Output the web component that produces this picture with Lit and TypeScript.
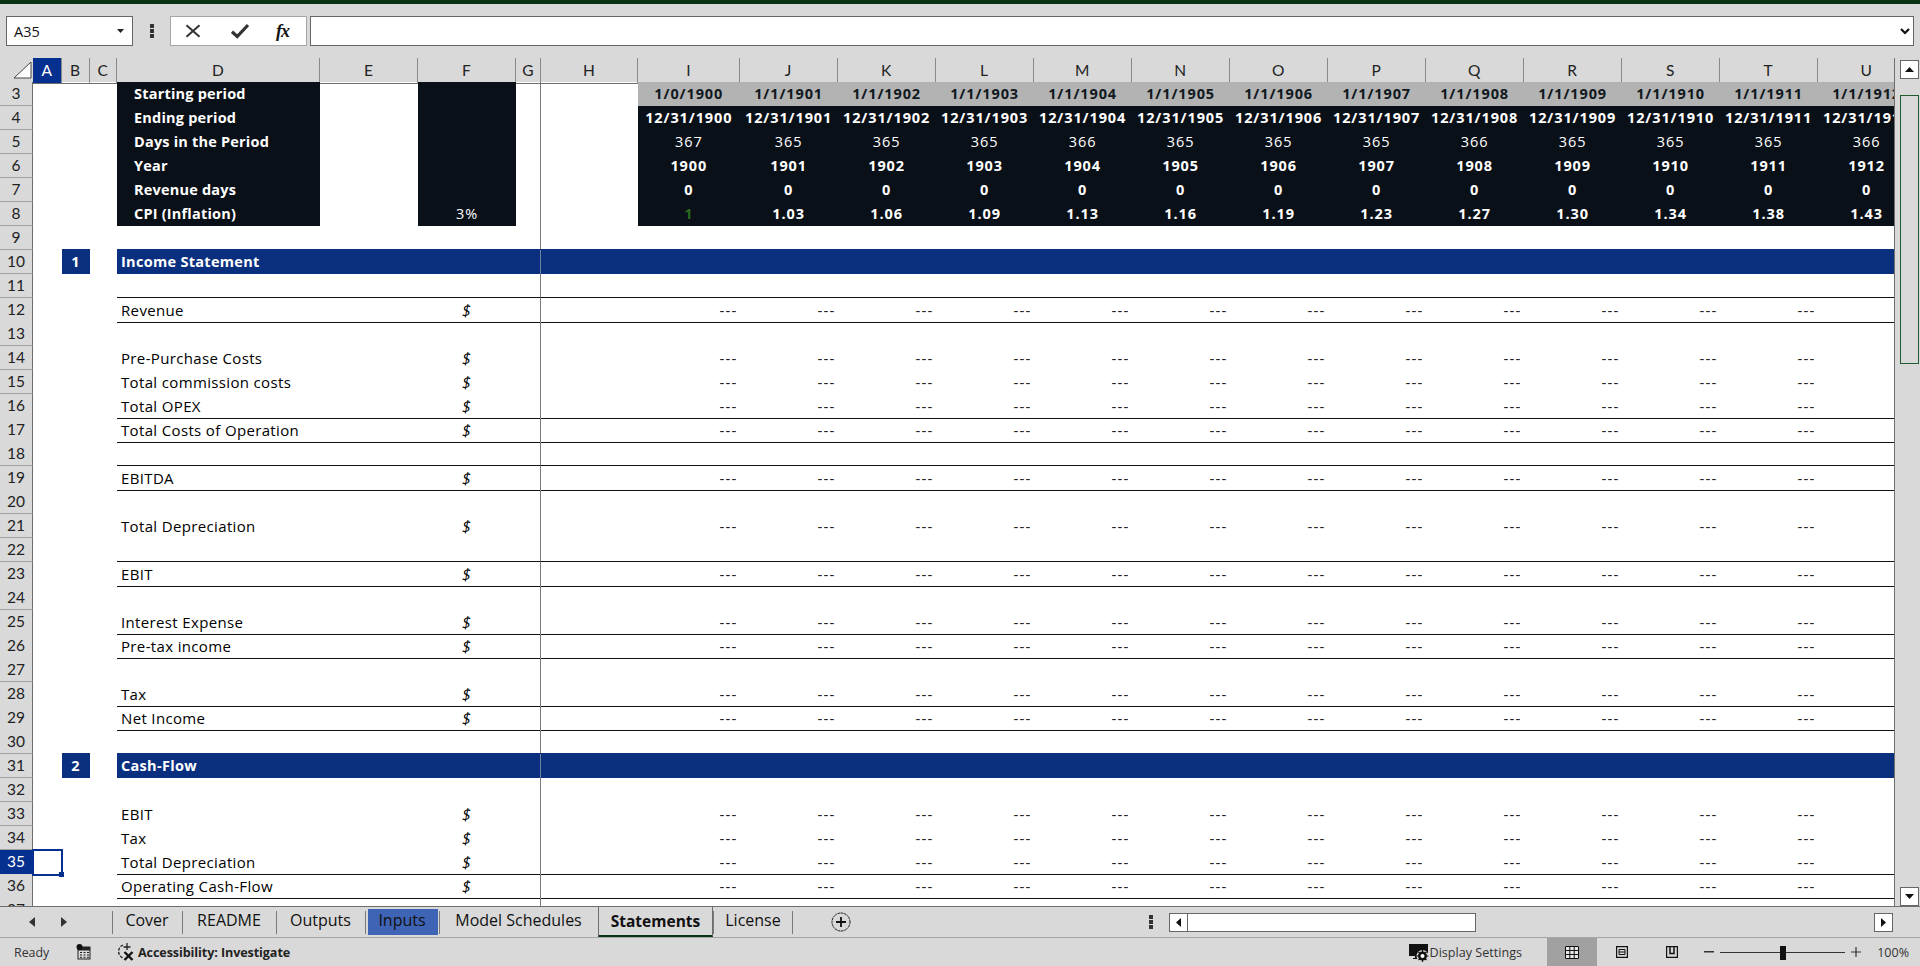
import { LitElement, html, css, nothing } from "lit";
import { customElement } from "lit/decorators.js";

type Row = { label?: string; dash?: boolean; line?: boolean; section?: string };

const ROWS: Record<number, Row> = {
  11: { line: true },
  12: { label: "Revenue", dash: true, line: true },
  14: { label: "Pre-Purchase Costs", dash: true },
  15: { label: "Total commission costs", dash: true },
  16: { label: "Total OPEX", dash: true, line: true },
  17: { label: "Total Costs of Operation", dash: true, line: true },
  18: { line: true },
  19: { label: "EBITDA", dash: true, line: true },
  21: { label: "Total Depreciation", dash: true },
  22: { line: true },
  23: { label: "EBIT", dash: true, line: true },
  25: { label: "Interest Expense", dash: true, line: true },
  26: { label: "Pre-tax income", dash: true, line: true },
  28: { label: "Tax", dash: true, line: true },
  29: { label: "Net Income", dash: true, line: true },
  33: { label: "EBIT", dash: true },
  34: { label: "Tax", dash: true },
  35: { label: "Total Depreciation", dash: true, line: true },
  36: { label: "Operating Cash-Flow", dash: true, line: true },
  10: { label: "Income Statement", section: "1" },
  31: { label: "Cash-Flow", section: "2" },
};

const COLS = "ABCDEFGHIJKLMNOPQRSTU".split("");
const PERIOD = COLS.slice(8);
const YEARS = PERIOD.map((_, i) => 1900 + i);
const DAYS = [367, 365, 365, 365, 366, 365, 365, 365, 366, 365, 365, 365, 366];
const CPI = ["1", "1.03", "1.06", "1.09", "1.13", "1.16", "1.19", "1.23", "1.27", "1.30", "1.34", "1.38", "1.43"];
const HEAD_LABELS: Record<number, string> = {
  3: "Starting period",
  4: "Ending period",
  5: "Days in the Period",
  6: "Year",
  7: "Revenue days",
  8: "CPI (Inflation)",
};
const TABS = ["Cover", "README", "Outputs", "Inputs", "Model Schedules", "Statements", "License"];

function headValue(r: number, i: number): string {
  switch (r) {
    case 3: return i === 0 ? "1/0/1900" : `1/1/${YEARS[i]}`;
    case 4: return `12/31/${YEARS[i]}`;
    case 5: return String(DAYS[i]);
    case 6: return String(YEARS[i]);
    case 7: return "0";
    default: return CPI[i];
  }
}

@customElement("app-root")
export class AppRoot extends LitElement {
  static styles = css`
    :host {
      display: flex;
      flex-direction: column;
      width: 1920px;
      height: 966px;
      overflow: hidden;
      background: #d9d9d9;
      font-family: "Open Sans", "Liberation Sans", sans-serif;
      color: #000;
    }
    .titlebar { height: 4px; background: #0a3314; flex: none; }

    /* formula bar */
    .fbar { flex: none; height: 54px; box-sizing: border-box; padding: 12px 6px 0 6px; display: flex; align-items: flex-start; }
    .namebox {
      width: 127px; height: 30px; box-sizing: border-box; border: 1px solid #666; background: #fff;
      display: flex; align-items: center; justify-content: space-between; padding: 0 8px 0 7px;
      font-size: 14.5px; color: #111;
    }
    .dots { width: 37px; height: 30px; display: flex; align-items: center; justify-content: center; }
    .fxbox {
      width: 137px; height: 30px; box-sizing: border-box; border: 1px solid #a6a6a6; background: #fff;
      display: flex; align-items: center; margin-right: 3px; padding-left: 14px;
    }
    .ck { margin-left: 30px; display: flex; }
    .fx { font: italic bold 18px "Liberation Serif", serif; color: #111; margin-left: 27px; letter-spacing: -1px; }
    .finput {
      flex: 1; height: 30px; box-sizing: border-box; border: 1px solid #666; background: #fff;
      display: flex; align-items: center; justify-content: flex-end; padding-right: 3px;
    }

    /* sheet */
    .main { flex: 1; min-height: 0; display: flex; overflow: hidden; }
    .sheet { width: 1895px; flex: none; box-sizing: border-box; overflow: hidden; border-right: 1px solid #6e6e6e; background: #fff; }
    .row {
      display: grid; height: 24px; width: 1916px;
      grid-template-columns: 33px 28.5px 28px 27.5px 203px 98px 98px 25px 97px 101.6px repeat(12, 98px);
      font-size: 15px; line-height: 24px; letter-spacing: 0.35px;
    }
    .c { box-sizing: border-box; min-width: 0; white-space: nowrap; position: relative; }
    .hdr { background: #d9d9d9; font: 15.5px/25px "Lato", sans-serif; color: #222; letter-spacing: 0; }
    .hdr .c { border-bottom: 1px solid #6e6e6e; text-align: center; }
    .hdr .c + .c { border-right: 1px solid #8a8a8a; }
    .hdr .c.sel { background: #06308f; color: #fff; }
    .corner { padding: 0; }
    .corner svg { display: block; }
    .rh {
      background: #d9d9d9; text-align: center; color: #222; font: 15.5px/23px "Lato", sans-serif; letter-spacing: 0;
      border-bottom: 1px solid #a0a0a0; border-right: 1px solid #6e6e6e;
    }
    .rh.sel { background: #06308f; color: #fff; }
    .ln { border-bottom: 1px solid #111; }
    .g { border-right: 1px solid #7a7a7a; }
    .dark { background: #0a1018; color: #fff; }
    .gray { background: #b3b3b3; color: #101820; }
    .b { font-weight: 700; }
    .ctr { text-align: center; }
    .num { font-size: 14.5px; letter-spacing: 0.9px; }
    .lbl { padding-left: 4px; }
    .hlbl { padding-left: 17px; font-weight: 700; font-size: 14.5px; letter-spacing: 0.2px; }
    .usd { text-align: center; font-style: italic; font-size: 16px; letter-spacing: 0; padding-right: 1px; }
    .dash { text-align: right; padding-right: 2px; color: #222; letter-spacing: 1.200px; }
    .green { color: #2b6a1c; }
    .navy { background: #0a2f7f; color: #fff; font-weight: 700; font-size: 14.5px; letter-spacing: 0.3px; box-shadow: 0 -1px 0 #0a2f7f; }
    .g.navy { border-right-color: #6f7f9f; }
    .cursor {
      position: absolute; inset: -1px -1px -1px -1px; border: 2px solid #06308f; box-sizing: border-box; z-index: 2;
    }
    .cursor::after {
      content: ""; position: absolute; right: -3px; bottom: -3px; width: 5px; height: 5px; background: #06308f;
    }

    /* vertical scrollbar */
    .vs { flex: 1; display: flex; flex-direction: column; align-items: center; padding: 2px 0 0 3px; box-sizing: border-box; }
    .sbtn {
      width: 19px; height: 19px; box-sizing: border-box; border: 1px solid #666; background: #fff;
      display: flex; align-items: center; justify-content: center; flex: none;
    }
    .thumb { width: 19px; height: 269px; box-sizing: border-box; margin-top: 16px; border: 1px solid #1f5c2e; background: #d9d9d9; flex: none; }
    .spring { flex: 1; }

    /* tabs */
    .tabs {
      flex: none; height: 32px; box-sizing: border-box; border-top: 1px solid #6e6e6e;
      border-bottom: 1px solid #a6a6a6; display: flex; position: relative;
    }
    .nav { width: 112px; box-sizing: border-box; padding-left: 29px; display: flex; align-items: center; gap: 26px; }
    .tablist {
      display: grid; grid-template-columns: 70px 94px 89px 74px 159px 115px 80px; height: 30px;
    }
    .tab {
      display: flex; align-items: center; justify-content: center; box-sizing: border-box; padding-bottom: 4px;
      font-size: 16px; color: #111; position: relative;
    }
    .tab::before {
      content: ""; position: absolute; left: 0; top: 4px; bottom: 3px; width: 1px; background: #7a7a7a;
    }
    .tab.blue::after {
      content: ""; position: absolute; inset: 2px 1px 2px 3px; background: #3f63b5; z-index: 0;
    }
    .tab span { position: relative; z-index: 1; }
    .tab.act {
      font-weight: 700; font-size: 15.500px; border-bottom: 2px solid #0a3314;
      border-left: 1px solid #6e6e6e; border-right: 1px solid #6e6e6e; margin-top: -1px; padding-bottom: 0;
    }
    .tab.act::before { display: none; }
    .tab.last::after { content: ""; position: absolute; right: 0; top: 4px; bottom: 3px; width: 1px; background: #7a7a7a; }
    .addwrap { width: 96px; display: flex; align-items: center; justify-content: center; }
    .tabspring { flex: 1; }
    .tdots { width: 17px; display: flex; align-items: center; justify-content: center; margin-right: 10px; }
    .hs { width: 724px; margin-right: 27px; display: flex; align-items: center; }
    .hbtn {
      width: 19px; height: 19px; box-sizing: border-box; border: 1px solid #666; background: #fff;
      display: flex; align-items: center; justify-content: center; flex: none;
    }
    .htrack { width: 288px; height: 19px; box-sizing: border-box; border: 1px solid #666; border-left: 0; background: #fff; flex: none; }
    .hspring { flex: 1; }

    /* status */
    .status {
      flex: none; height: 28px; display: flex; align-items: center; font: 12.6px "Open Sans", "Noto Sans", sans-serif; color: #333;
    }
    .ready { width: 76px; padding-left: 14px; box-sizing: border-box; font-size: 12.4px; }
    .st-ic { display: flex; align-items: center; }
    .calc { width: 40px; }
    .acc { font-weight: 700; color: #222; font-size: 12.600px; margin-left: 2px; letter-spacing: -0.1px; }
    .st-spring { flex: 1; }
    .disp { margin-left: 1px; margin-right: 25px; }
    .view { width: 50px; height: 28px; display: flex; align-items: center; justify-content: center; }
    .view.on { background: #a0a0a0; }
    .zoom { display: flex; align-items: center; margin-left: 7px; width: 157px; flex: none; }
    .slider { width: 125px; flex: none; height: 1px; background: #333; position: relative; margin: 0 6px; }
    .slider i { position: absolute; left: 60px; top: -6px; width: 6px; height: 14px; background: #111; }
    .pct { width: 59px; flex: none; text-align: right; padding-right: 11px; box-sizing: border-box; font-size: 12.500px; }
  `;

  private icon(kind: string) {
    switch (kind) {
      case "x":
        return html`<svg width="16" height="14" viewBox="0 0 16 14"><path d="M1.500 1.200 14.500 12.800M14.500 1.200 1.500 12.800" stroke="#333" stroke-width="2" fill="none"/></svg>`;
      case "check":
        return html`<svg width="18" height="16" viewBox="0 0 18 16"><path d="M1 8.700 6.200 13.500 17 2" stroke="#333" stroke-width="3.200" fill="none"/></svg>`;
      case "dots":
        return html`<svg width="4" height="14" viewBox="0 0 4 14"><rect y="0" width="4" height="4" fill="#333"/><rect y="5" width="4" height="4" fill="#333"/><rect y="10" width="4" height="4" fill="#333"/></svg>`;
      default:
        return nothing;
    }
  }

  private headCells(r: number) {
    const tone = r === 3 ? "gray b" : "dark";
    return html`
      <div class="c"></div><div class="c"></div><div class="c"></div>
      <div class="c dark hlbl">${HEAD_LABELS[r]}</div>
      <div class="c"></div>
      <div class="c dark ctr num">${r === 8 ? "3%" : ""}</div>
      <div class="c g"></div>
      <div class="c"></div>
      ${PERIOD.map((_, i) => {
        const weight = r === 5 || r === 3 ? "" : "b";
        const green = r === 8 && i === 0 ? "green" : "";
        return html`<div class="c ctr num ${tone} ${weight} ${green}">${headValue(r, i)}</div>`;
      })}
    `;
  }

  private bodyCells(r: number) {
    const d = ROWS[r] ?? {};
    if (d.section) {
      return html`
        <div class="c"></div>
        <div class="c navy ctr">${d.section}</div>
        <div class="c"></div>
        <div class="c navy lbl">${d.label}</div>
        <div class="c navy"></div><div class="c navy"></div><div class="c navy g"></div>
        ${COLS.slice(7).map(() => html`<div class="c navy"></div>`)}
      `;
    }
    const ln = d.line ? "ln" : "";
    return html`
      <div class="c">${r === 35 ? html`<div class="cursor"></div>` : nothing}</div>
      <div class="c"></div><div class="c"></div>
      <div class="c lbl ${ln}">${d.label ?? ""}</div>
      <div class="c ${ln}"></div>
      <div class="c usd ${ln}">${d.label ? "$" : ""}</div>
      <div class="c g ${ln}"></div>
      <div class="c ${ln}"></div>
      ${PERIOD.map((_, i) => html`<div class="c dash ${ln}">${d.dash && i < 12 ? "---" : ""}</div>`)}
    `;
  }

  private renderGrid() {
    const rows = [];
    for (let r = 3; r <= 37; r++) {
      rows.push(html`
        <div class="row">
          <div class="c rh ${r === 35 ? "sel" : ""}">${r}</div>
          ${r <= 8 ? this.headCells(r) : this.bodyCells(r)}
        </div>
      `);
    }
    return rows;
  }

  render() {
    return html`
      <div class="titlebar"></div>
      <div class="fbar">
        <div class="namebox"><span>A35</span>
          <svg width="7" height="4" viewBox="0 0 7 4"><path d="M0 0H7L3.500 4Z" fill="#222"/></svg>
        </div>
        <div class="dots">${this.icon("dots")}</div>
        <div class="fxbox">
          ${this.icon("x")}<span class="ck">${this.icon("check")}</span><span class="fx">fx</span>
        </div>
        <div class="finput">
          <svg width="10" height="7" viewBox="0 0 10 7"><path d="M1 1 5 5 9 1" stroke="#111" stroke-width="2.200" fill="none"/></svg>
        </div>
      </div>

      <div class="main">
        <div class="sheet">
          <div class="row hdr">
            <div class="c corner">
              <svg width="33" height="23" viewBox="0 0 33 23"><path d="M14 20 31 4V20Z" fill="#fff" stroke="#444"/></svg>
            </div>
            ${COLS.map((c) => html`<div class="c ${c === "A" ? "sel" : ""}">${c}</div>`)}
          </div>
          ${this.renderGrid()}
        </div>
        <div class="vs">
          <div class="sbtn"><svg width="9" height="5" viewBox="0 0 9 5"><path d="M0 5H9L4.500 0Z" fill="#111"/></svg></div>
          <div class="thumb"></div>
          <div class="spring"></div>
          <div class="sbtn"><svg width="9" height="5" viewBox="0 0 9 5"><path d="M0 0H9L4.500 5Z" fill="#111"/></svg></div>
        </div>
      </div>

      <div class="tabs">
        <div class="nav">
          <svg width="6" height="10" viewBox="0 0 6 10"><path d="M6 0V10L0 5Z" fill="#333"/></svg>
          <svg width="6" height="10" viewBox="0 0 6 10"><path d="M0 0V10L6 5Z" fill="#333"/></svg>
        </div>
        <div class="tablist">
          ${TABS.map((t) => html`<div class="tab ${t === "Inputs" ? "blue" : ""} ${t === "Statements" ? "act" : ""} ${t === "License" ? "last" : ""}"><span>${t}</span></div>`)}
        </div>
        <div class="addwrap">
          <svg width="20" height="20" viewBox="0 0 20 20"><circle cx="10" cy="10" r="9" fill="none" stroke="#222" stroke-dasharray="2.500 .5"/><path d="M10 5V15M5 10H15" stroke="#111" stroke-width="1.800"/></svg>
        </div>
        <div class="tabspring"></div>
        <div class="tdots">${this.icon("dots")}</div>
        <div class="hs">
          <div class="hbtn"><svg width="5" height="9" viewBox="0 0 5 9"><path d="M5 0V9L0 4.500Z" fill="#111"/></svg></div>
          <div class="htrack"></div>
          <div class="hspring"></div>
          <div class="hbtn"><svg width="5" height="9" viewBox="0 0 5 9"><path d="M0 0V9L5 4.500Z" fill="#111"/></svg></div>
        </div>
      </div>

      <div class="status">
        <div class="ready">Ready</div>
        <div class="st-ic calc">
          <svg width="16" height="16" viewBox="0 0 16 16"><rect x="2" y="3" width="12" height="12" fill="none" stroke="#222"/><rect x="2" y="3" width="12" height="3.500" fill="#222"/><circle cx="3.500" cy="3" r="3" fill="#111"/><path d="M4 8.500h2M7.500 8.500h2M11 8.500h2M4 11h2M7.500 11h2M11 11h2M4 13.300h2M7.500 13.300h2M11 13.300h2" stroke="#222"/></svg>
        </div>
        <div class="st-ic">
          <svg width="20" height="20" viewBox="0 0 20 20"><path d="M7 3A7 7 0 0 0 7 16" stroke="#222" stroke-width="1.300" stroke-dasharray="3 1.300" fill="none"/><path d="M11 1v7M7.500 5h7" stroke="#222" stroke-width="1.300"/><path d="M8.500 10 16.500 18M16.500 10 8.500 18" stroke="#111" stroke-width="2.400"/></svg>
        </div>
        <div class="acc">Accessibility: Investigate</div>
        <div class="st-spring"></div>
        <div class="st-ic">
          <svg width="20" height="20" viewBox="0 0 20 20"><path d="M0 2H19V14H0Z" fill="#111"/><path d="M6 14H9V17H4V16H6Z" fill="#111"/><circle cx="13.500" cy="14" r="6" fill="#d9d9d9"/><circle cx="13.500" cy="14" r="4.500" fill="#111"/><path d="M13.500 8V20M7.500 14H19.500M9.500 10 17.500 18M17.500 10 9.500 18" stroke="#111" stroke-width="1.200"/><circle cx="13.500" cy="14" r="2" fill="#fff"/></svg>
        </div>
        <div class="disp">Display Settings</div>
        <div class="view on"><svg width="14" height="13" viewBox="0 0 14 13"><rect width="14" height="13" fill="#e8e8e8"/><path d="M.5.500H13.500V12.500H.5ZM.5 4.500H13.500M.5 8.500H13.500M4.800.500V12.500M9.200.500V12.500" stroke="#111" fill="none"/></svg></div>
        <div class="view"><svg width="12" height="12" viewBox="0 0 12 12"><path d="M.6.600H11.400V11.400H.6Z" stroke="#111" stroke-width="1.200" fill="none"/><path d="M3 3.500H9V8.500H3ZM3 6H9" stroke="#111" fill="none"/></svg></div>
        <div class="view"><svg width="12" height="12" viewBox="0 0 12 12"><path d="M.6.600H11.400V11.400H.6Z" stroke="#111" stroke-width="1.200" fill="none"/><path d="M4 1V7.500H8V1" stroke="#111" stroke-width="1.500" fill="none"/></svg></div>
        <div class="zoom">
          <svg width="10" height="2" viewBox="0 0 10 2"><rect width="10" height="1.500" fill="#333"/></svg>
          <div class="slider"><i></i></div>
          <svg width="10" height="10" viewBox="0 0 10 10"><path d="M5 0V10M0 5H10" stroke="#333" stroke-width="1.200"/></svg>
        </div>
        <div class="pct">100%</div>
      </div>
    `;
  }
}
